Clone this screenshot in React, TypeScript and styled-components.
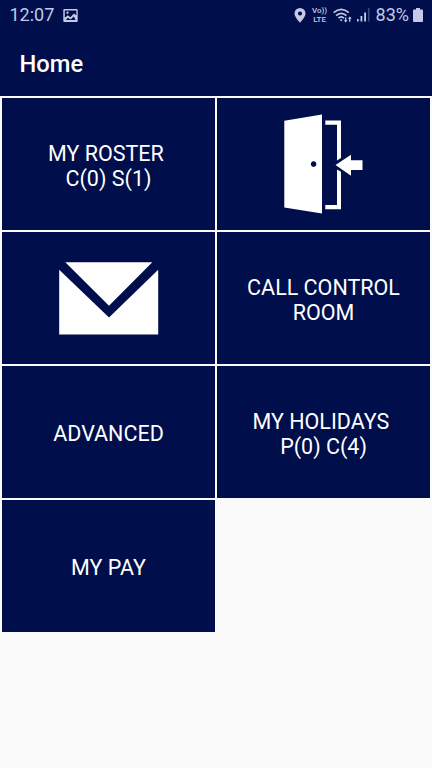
import React from "react";
import styled, { createGlobalStyle } from "styled-components";

const NAVY = "#000f4b";
const STATUS = "#c3c9e6";

const GlobalStyle = createGlobalStyle`
  * { box-sizing: border-box; }
  body { margin: 0; background: #fafafa; font-family: Roboto, "Liberation Sans", sans-serif; }
`;

const Screen = styled.main`
  width: 432px;
  height: 768px;
  overflow: hidden;
  background: #fafafa;
`;

const Header = styled.header`
  height: 96px;
  background: ${NAVY};
`;

const StatusBar = styled.div`
  display: flex;
  align-items: center;
  justify-content: space-between;
  height: 30px;
  padding: 0 9px 0 9.5px;
  color: ${STATUS};
  font-size: 18px;
  line-height: 30px;
`;

const StatusGroup = styled.div`
  display: flex;
  align-items: center;
`;

const StatusIcon = styled.svg<{ $gap?: number }>`
  display: block;
  flex: none;
  margin-left: ${(p) => p.$gap ?? 0}px;
  fill: currentColor;
`;

const Battery = styled.span`
  margin-left: 6px;
`;

const VoLte = styled.span`
  display: flex;
  flex-direction: column;
  align-items: center;
  width: 16px;
  margin-left: 6px;
  font-size: 8px;
  font-weight: 500;
  line-height: 9px;
  white-space: nowrap;
`;

const Title = styled.h1`
  margin: 0;
  padding: 0 19.5px;
  color: #fff;
  font-size: 23.7px;
  font-weight: 500;
  line-height: 68px;
`;

const Grid = styled.div`
  display: grid;
  grid-template-columns: 213px 213px;
  grid-auto-rows: 132px;
  gap: 2px;
  padding: 2px;
`;

const Tile = styled.button`
  display: flex;
  align-items: center;
  justify-content: center;
  padding: 3px 0 0;
  border: 0;
  background: ${NAVY};
  color: #fff;
  font: 400 21.5px/25px Roboto, "Liberation Sans", sans-serif;
  text-align: center;
  white-space: pre;
`;

const IconTile = styled(Tile)`
  padding: 0;
`;

const TileIcon = styled.svg`
  display: block;
  fill: #fff;
`;

const PictureIcon = () => (
  <StatusIcon width="15" height="13" viewBox="0 0 15 13" $gap={9}>
    <path
      fillRule="evenodd"
      d="M1.3 0h12.4q1 0 1 1v11q0 1-1 1H1.3q-1 0-1-1V1q0-1 1-1ZM1.8 1.5v7.2l3-2.5 2.5 2 3.7-3.7 2.3 2.1V1.5ZM4.5 2.4a1.2 1.2 0 1 1-.1 0ZM2.8 11h9.8L10.8 7.6 7.6 10.4 4.9 8.7Z"
    />
  </StatusIcon>
);

const PinIcon = () => (
  <StatusIcon width="12" height="15" viewBox="0 0 12 15">
    <path
      fillRule="evenodd"
      d="M6 0a5.5 5.5 0 0 1 5.5 5.5C11.5 9 6 14.7 6 14.7S.5 9 .5 5.5A5.5 5.5 0 0 1 6 0ZM6 3.4a2.1 2.1 0 1 0 .01 0Z"
    />
  </StatusIcon>
);

const WifiIcon = () => (
  <StatusIcon width="20" height="15" viewBox="0 0 20 15" $gap={5}>
    <g fill="none" stroke="currentColor" strokeWidth="1.7">
      <path d="M.6 4.7Q8.2-2 15.8 4.7M3.1 7.7Q8.2 3 13.4 7.7M5.500 10.200Q8.200 7.500 11 10.200" />
    </g>
    <path d="M6.8 11.7Q8.2 10.6 9.6 11.7L8.2 13.4ZM12 9.5h1.300v2.800h1.300l-1.900 2.200-1.900-2.200H12ZM17.400 13.800V10.700h1.300L16.800 8.500l-1.900 2.200h1.200v3.100Z" />
  </StatusIcon>
);

const SignalIcon = () => (
  <StatusIcon width="13" height="14" viewBox="0 0 13 14" $gap={4}>
    <path d="M0 11h1.700v2.500H0ZM3.500 8h1.800v5.500H3.500ZM7.200 4.500H9v9H7.200Z" />
    <path d="M11 0h1.500v13.500H11Z" opacity=".3" />
  </StatusIcon>
);

const BatteryIcon = () => (
  <StatusIcon width="10" height="14" viewBox="0 0 10 14" $gap={4}>
    <path d="M3 0h4v1.500h2q1 0 1 1V13q0 1-1 1H1q-1 0-1-1V2.500q0-1 1-1h2Z" />
  </StatusIcon>
);

const DoorIcon = () => (
  <TileIcon width="80" height="100" viewBox="0 0 80 100">
    <path fillRule="evenodd" d="M.3 6.8 38 .5v99L.3 93.500ZM29.600 47.300a2.800 2.800 0 1 0 .01 0Z" />
    <path d="M41.300 6.500H57V44l-4 2.400V10.700H41.300ZM41.300 95.300H57V57.800l-4-2.400v35.700H41.300Z" />
    <path d="M51.500 50.900 67 40.800v5.500h11.500v9.800H67v5.600Z" />
  </TileIcon>
);

const EnvelopeIcon = () => (
  <TileIcon width="100" height="73" viewBox="0 0 100 73">
    <path d="M6.300.2h87L50 43.700ZM.2 7.800 50 55.500 99.200 7.800v64.700H.2Z" />
  </TileIcon>
);

export default function App() {
  return (
    <Screen>
      <GlobalStyle />
      <Header>
        <StatusBar>
          <StatusGroup>
            <span>12:07</span>
            <PictureIcon />
          </StatusGroup>
          <StatusGroup>
            <PinIcon />
            <VoLte>
              <span>Vo))</span>
              <span>LTE</span>
            </VoLte>
            <WifiIcon />
            <SignalIcon />
            <Battery>83%</Battery>
            <BatteryIcon />
          </StatusGroup>
        </StatusBar>
        <Title>Home</Title>
      </Header>
      <Grid>
        <Tile>{"MY ROSTER \nC(0) S(1)"}</Tile>
        <IconTile aria-label="Sign in"><DoorIcon /></IconTile>
        <IconTile aria-label="Messages"><EnvelopeIcon /></IconTile>
        <Tile>{"CALL CONTROL\nROOM"}</Tile>
        <Tile>ADVANCED</Tile>
        <Tile>{"MY HOLIDAYS \nP(0) C(4)"}</Tile>
        <Tile>MY PAY</Tile>
      </Grid>
    </Screen>
  );
}
